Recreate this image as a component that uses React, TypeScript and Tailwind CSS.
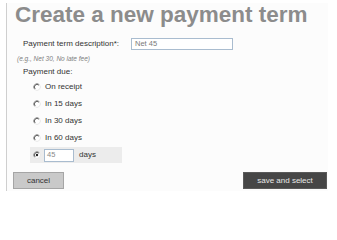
import React from 'react';

function Radio({ checked = false }: { checked?: boolean }) {
  // Classic sunken radio: dark arc top-left, light arc bottom-right.
  return (
    <svg width="8" height="8" viewBox="0 0 12 12" className="shrink-0">
      <circle cx="6" cy="6" r="5" fill="#ffffff" />
      <path d="M2.46 9.54 A5 5 0 0 1 9.54 2.46" fill="none" stroke="#8a8a8a" strokeWidth="1.3" />
      <path d="M3.3 8.7 A3.8 3.8 0 0 1 8.7 3.3" fill="none" stroke="#303030" strokeWidth="1.1" />
      <path d="M9.54 2.46 A5 5 0 0 1 2.46 9.54" fill="none" stroke="#e4e4e4" strokeWidth="1.2" />
      {checked && <circle cx="6" cy="6" r="1.8" fill="#202020" />}
    </svg>
  );
}

const options = ['On receipt', 'In 15 days', 'In 30 days', 'In 60 days'];

export default function App() {
  return (
    <div className="w-[337px] h-[201px] bg-white pt-[3px] font-['Liberation_Sans',Arial,sans-serif] text-[#333333]">
      <div className="ml-[6px] w-[322px] h-[188px] border-l border-[#cfcfcf] bg-[#fcfcfc] flex flex-col">
        <h1 className="pl-[8px] text-[22.5px] leading-[24px] font-bold text-[#8c8c8c] whitespace-nowrap">
          Create a new payment term
        </h1>

        <div className="mt-[11px] flex items-center h-[12px]">
          <label className="ml-[16px] w-[108px] text-[8px] leading-[10px]">Payment term description*:</label>
          <div className="w-[102px] h-[12px] border border-[#a9bccf] bg-white flex items-center pl-[3px] text-[7.5px] text-[#7a7a7a]">
            Net 45
          </div>
        </div>

        <p className="mt-[5px] ml-[10px] text-[6.5px] leading-[8px] italic text-[#808080]">
          (e.g., Net 30, No late fee)
        </p>

        <p className="mt-[4px] ml-[16px] text-[8px] leading-[10px]">Payment due:</p>

        <div className="mt-[1px] flex flex-col">
          {options.map((o) => (
            <div key={o} className="h-[17px] flex items-center gap-[4px] pl-[26px] text-[8px]">
              <Radio />
              <span>{o}</span>
            </div>
          ))}
          <div className="mt-[1px] ml-[23px] w-[92px] h-[16px] bg-[#ececec] flex items-center pl-[3px] text-[8px]">
            <Radio checked />
            <div className="ml-[3px] w-[30px] h-[13px] border border-[#a9bccf] bg-white flex items-center pl-[2px] text-[7.5px] text-[#8a8a8a]">
              45
            </div>
            <span className="ml-[5px]">days</span>
          </div>
        </div>

        <div className="mt-[9px] flex justify-between pr-[1px]">
          <button className="ml-[6px] w-[51px] h-[17px] bg-[#c9c9c9] border border-[#a5a5a5] text-[8px] text-[#333333] flex items-center justify-center">
            cancel
          </button>
          <button className="w-[84px] h-[17px] bg-[#464646] border border-[#5a5a5a] text-[8px] text-[#e8e8e8] flex items-center justify-center">
            save and select
          </button>
        </div>
      </div>
    </div>
  );
}
